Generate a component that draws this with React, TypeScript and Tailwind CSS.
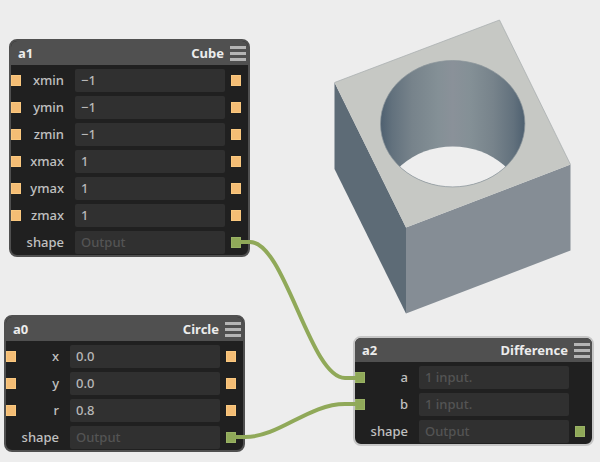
import React, { useState } from 'react';

type Port = 'value' | 'linked' | 'open';

interface Row {
  name: string;
  value?: string;
  hint?: string;
  input?: Port;
  output?: Port;
}

interface NodeData {
  id: string;
  kind: string;
  place: string;
  border: string;
  rows: Row[];
}

const param = (name: string, value: string): Row => ({ name, value, input: 'value', output: 'value' });

const nodes: NodeData[] = [
  {
    id: 'a1',
    kind: 'Cube',
    place: 'left-[9px] top-[39px]',
    border: 'border-[#505050]',
    rows: [
      param('xmin', '−1'),
      param('ymin', '−1'),
      param('zmin', '−1'),
      param('xmax', '1'),
      param('ymax', '1'),
      param('zmax', '1'),
      { name: 'shape', hint: 'Output', output: 'linked' },
    ],
  },
  {
    id: 'a0',
    kind: 'Circle',
    place: 'left-[4px] top-[315px]',
    border: 'border-[#505050]',
    rows: [
      param('x', '0.0'),
      param('y', '0.0'),
      param('r', '0.8'),
      { name: 'shape', hint: 'Output', output: 'linked' },
    ],
  },
  {
    id: 'a2',
    kind: 'Difference',
    place: 'left-[353px] top-[336px]',
    border: 'border-[#c6c6c6]',
    rows: [
      { name: 'a', hint: '1 input.', input: 'linked' },
      { name: 'b', hint: '1 input.', input: 'linked' },
      { name: 'shape', hint: 'Output', output: 'open' },
    ],
  },
];

const PortBox: React.FC<{ port?: Port; label: string }> = ({ port, label }) => {
  if (!port) return <span className="w-[10px] shrink-0" />;
  return (
    <button
      type="button"
      aria-label={label}
      className={`w-[10px] h-[11px] shrink-0 border ${
        port === 'value' ? 'bg-[#f4bd75] border-[#fac87f]' : 'bg-[#90a959] border-[#99b264]'
      }`}
    />
  );
};

const NodeRow: React.FC<{ nodeId: string; row: Row }> = ({ nodeId, row }) => {
  const [value, setValue] = useState(row.value ?? '');
  const fieldId = `${nodeId}-${row.name}`;

  return (
    <div className="flex items-center h-[23px]">
      <PortBox port={row.input} label={`${row.name} in`} />
      <label htmlFor={fieldId} className="w-[54px] pr-[11px] pb-[2px] text-right font-medium">{row.name}</label>
      <input
        id={fieldId}
        type="text"
        value={value}
        placeholder={row.hint}
        readOnly={row.value === undefined}
        onChange={(e) => setValue(e.target.value)}
        className="w-[150px] h-[23px] mr-[6px] px-[6px] pb-[2px] rounded-[2px] bg-[#303030] font-medium text-[#b8b8b8] placeholder:text-[#545454] outline-none"
      />
      <PortBox port={row.output} label={`${row.name} out`} />
    </div>
  );
};

const NodeCard: React.FC<{ node: NodeData }> = ({ node }) => (
  <section className={`absolute ${node.place} ${node.border} border-2 rounded-lg bg-[#202020] overflow-hidden pr-[7px] pb-px`}>
    <header className="flex items-center h-6 -mr-[7px] pl-[7px] pr-[2px] bg-[#505050] text-[#ececec] font-bold">
      <h2>{node.id}</h2>
      <span className="ml-auto mr-[6px]">{node.kind}</span>
      <button type="button" aria-label={`${node.id} menu`} className="flex flex-col gap-[3px]">
        <span className="w-4 h-[3px] bg-[#b5b5b5]" />
        <span className="w-4 h-[3px] bg-[#b5b5b5]" />
        <span className="w-4 h-[3px] bg-[#b5b5b5]" />
      </button>
    </header>
    <div className="flex flex-col gap-1 pt-1">
      {node.rows.map(row => (
        <NodeRow key={row.name} nodeId={node.id} row={row} />
      ))}
    </div>
  </section>
);

const Solid: React.FC = () => (
  <svg className="absolute left-[330px] top-[16px]" width="246" height="302" viewBox="330 16 246 302" aria-hidden="true">
    <defs>
      <linearGradient id="bore">
        <stop offset="0" stopColor="#4e6070" />
        <stop offset="0.08" stopColor="#62717d" />
        <stop offset="0.22" stopColor="#77838b" />
        <stop offset="0.4" stopColor="#849096" />
        <stop offset="0.5" stopColor="#8a9199" />
        <stop offset="0.62" stopColor="#849096" />
        <stop offset="0.78" stopColor="#77838b" />
        <stop offset="0.92" stopColor="#62717d" />
        <stop offset="1" stopColor="#4e6070" />
      </linearGradient>
      <clipPath id="rim">
        <ellipse cx="452.7" cy="123.7" rx="72.2" ry="63.2" />
      </clipPath>
    </defs>
    <path d="M334.5 82.5 406 227.5V313.5L334.5 169Z" fill="#5d6b76" />
    <path d="M406 227.5 570.5 164.5V250.5L406 313.5Z" fill="#858d95" />
    <path d="M334.5 82.5 499.5 20 570.5 164.5 406 227.5Z" fill="#c6c8c4" />
    <path d="M334.5 82.5 499.5 20 570.5 164.5" fill="none" stroke="#a5aaac" strokeWidth="0.7" />
    <ellipse cx="452.7" cy="123.7" rx="72.2" ry="63.2" fill="url(#bore)" />
    <ellipse cx="452.7" cy="209.7" rx="72.2" ry="63.2" fill="#eeeeee" clipPath="url(#rim)" />
    <ellipse cx="452.7" cy="123.7" rx="72.2" ry="63.2" fill="none" stroke="#8a9399" strokeWidth="0.7" />
  </svg>
);

const Wires: React.FC = () => (
  <svg className="absolute left-0 top-0 pointer-events-none" width="600" height="462" fill="none" stroke="#90a959" strokeWidth="4" aria-hidden="true">
    <path d="M236 242H250C285 242 310 378 345 378H360" />
    <path d="M231 437H245C280 437 308 404 345 404H360" />
  </svg>
);

const App: React.FC = () => (
  <main className="relative min-h-screen overflow-hidden bg-[#ededed] font-['Noto_Sans','Open_Sans',sans-serif] text-[13px] leading-5 text-[#c0c0c0]">
    <Solid />
    {nodes.map(node => (
      <NodeCard key={node.id} node={node} />
    ))}
    <Wires />
  </main>
);

export default App;
